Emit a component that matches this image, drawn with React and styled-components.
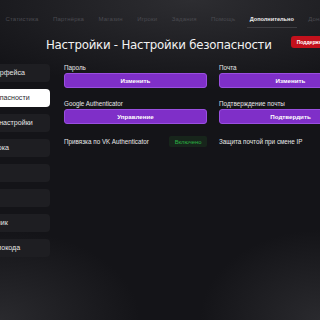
import styled, { createGlobalStyle } from 'styled-components'

const Global = createGlobalStyle`
  html, body { margin: 0; padding: 0; }
  body {
    width: 320px;
    height: 320px;
    overflow: hidden;
    background: #141418;
    font-family: "Liberation Sans", Arial, sans-serif;
  }
`

const Page = styled.div`
  width: 320px;
  height: 320px;
  overflow: hidden;
  background:
    radial-gradient(ellipse 140px 90px at 0% 100%, rgba(60,60,64,0.55), transparent),
    radial-gradient(ellipse 120px 90px at 100% 100%, rgba(60,60,64,0.55), transparent),
    radial-gradient(ellipse 260px 90px at 60% 0%, rgba(48,48,52,0.9), transparent),
    #141418;
`

const Nav = styled.nav`
  display: flex;
  align-items: center;
  height: 38px;
  gap: 14.5px;
  white-space: nowrap;
`

const Logo = styled.div`
  width: 12px;
  height: 11px;
  margin-left: -9px;
  margin-right: -2px;
  border: 1px solid #3a3a3e;
  border-radius: 3px;
`

const NavItem = styled.span`
  position: relative;
  font-size: ${p => (p.$active ? '5.6px' : '6px')};
  color: ${p => (p.$active ? '#ececec' : '#4a4a50')};
  font-weight: ${p => (p.$active ? 700 : 400)};
  letter-spacing: ${p => (p.$active ? '0' : '0.15px')};
  &::after {
    content: '';
    display: ${p => (p.$active ? 'block' : 'none')};
    position: absolute;
    left: -3px;
    right: -3px;
    top: 11px;
    height: 1px;
    background: #3c3c40;
  }
`

const Header = styled.div`
  display: flex;
  align-items: center;
  gap: 19px;
  padding-left: 46px;
  height: 14px;
  white-space: nowrap;
`

const Title = styled.h1`
  margin: 0;
  font-family: "DejaVu Sans", sans-serif;
  font-weight: 400;
  font-size: 11.8px;
  letter-spacing: -0.25px;
  color: #f2f2f2;
`

const SupportButton = styled.button`
  flex: none;
  border: none;
  border-radius: 3px;
  background: #c3111c;
  color: #fff;
  font-family: "Liberation Sans", Arial, sans-serif;
  font-weight: 700;
  font-size: 5px;
  height: 12px;
  padding: 0 6px;
  margin-top: -6px;
`

const Body = styled.div`
  display: flex;
  gap: 14px;
  margin-left: -62px;
  margin-top: 12px;
`

const Sidebar = styled.div`
  flex: none;
  width: 112px;
  display: flex;
  flex-direction: column;
  gap: 7px;
`

const SideItem = styled.div`
  height: 18px;
  display: flex;
  align-items: center;
  padding-left: 10px;
  border-radius: 4px;
  font-size: 7.1px;
  white-space: nowrap;
  background: ${p => (p.$active ? '#ffffff' : '#1e1e22')};
  color: ${p => (p.$active ? '#2a2a2e' : '#e6e6e6')};
`

const Content = styled.div`
  flex: none;
  display: grid;
  grid-template-columns: 143px 143px;
  column-gap: 12px;
  row-gap: 12px;
  align-content: start;
`

const Field = styled.div`
  display: flex;
  flex-direction: column;
  gap: 1px;
`

const Label = styled.div`
  font-size: 6.3px;
  line-height: 8px;
  color: #e8e8e8;
  white-space: nowrap;
`

const ActionButton = styled.button`
  height: 15px;
  border: 1px solid #9a4fe0;
  border-radius: 3px;
  background: #7f2fc8;
  color: #fff;
  font-family: "Liberation Sans", Arial, sans-serif;
  font-weight: 700;
  font-size: 6.2px;
  padding: 0;
`

const ToggleRow = styled.div`
  display: flex;
  align-items: center;
  justify-content: space-between;
  height: 11px;
`

const Badge = styled.span`
  height: 11px;
  width: 38px;
  display: flex;
  align-items: center;
  justify-content: center;
  border-radius: 2px;
  background: #17251b;
  color: #2bb044;
  font-size: 5.8px;
`

const sideItems = [
  'Настройки интерфейса',
  'Настройки безопасности',
  'Персональные настройки',
  'Статистика игрока',
  'Уведомления',
  'Сессии',
  'Реферальный ник',
  'Активация промокода',
]

const navItems = ['Статистика', 'Партнёрка', 'Магазин', 'Игроки', 'Задания', 'Помощь', 'Дополнительно', 'Донат']

export default function App() {
  return (
    <>
      <Global />
      <Page>
        <Nav>
          <Logo />
          {navItems.map(n => (
            <NavItem key={n} $active={n === 'Дополнительно'}>{n}</NavItem>
          ))}
        </Nav>
        <Header>
          <Title>Настройки - Настройки безопасности</Title>
          <SupportButton>Поддержка</SupportButton>
        </Header>
        <Body>
          <Sidebar>
            {sideItems.map(s => (
              <SideItem key={s} $active={s === 'Настройки безопасности'}>{s}</SideItem>
            ))}
          </Sidebar>
          <Content>
            <Field>
              <Label>Пароль</Label>
              <ActionButton>Изменить</ActionButton>
            </Field>
            <Field>
              <Label>Почта</Label>
              <ActionButton>Изменить</ActionButton>
            </Field>
            <Field>
              <Label>Google Authenticator</Label>
              <ActionButton>Управление</ActionButton>
            </Field>
            <Field>
              <Label>Подтверждение почты</Label>
              <ActionButton>Подтвердить</ActionButton>
            </Field>
            <ToggleRow>
              <Label>Привязка по VK Authenticator</Label>
              <Badge>Включено</Badge>
            </ToggleRow>
            <ToggleRow>
              <Label>Защита почтой при смене IP</Label>
            </ToggleRow>
          </Content>
        </Body>
      </Page>
    </>
  )
}
